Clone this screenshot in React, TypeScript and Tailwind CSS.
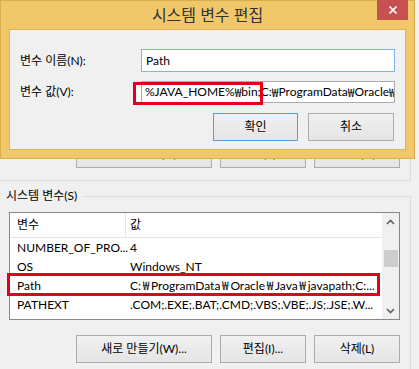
import React from "react";

const btn =
  "h-[28px] border border-[#acacac] bg-[linear-gradient(#f0f0f0,#e5e5e5)] flex items-center justify-center text-[12px] text-black";

const Chevron = ({ down }: { down?: boolean }) => (
  <svg width="9" height="6" viewBox="0 0 9 6" className={down ? "rotate-180" : ""}>
    <path d="M1 5 L4.5 1.5 L8 5" fill="none" stroke="#606060" strokeWidth="1.6" />
  </svg>
);

// backslash shows as a won sign in the Korean UI font
const Won = ({ text }: { text: string }) => (
  <>
    {text.split("₩").map((part, i) => (
      <React.Fragment key={i}>
        {i > 0 && (
          <span className="inline-block w-[10px] text-center font-['Noto_Sans_CJK_KR',sans-serif]">₩</span>
        )}
        {part}
      </React.Fragment>
    ))}
  </>
);

const rows = [
  { name: "NUMBER_OF_PRO...", value: "4" },
  { name: "OS", value: "Windows_NT" },
  { name: "Path", value: "C:₩ProgramData₩Oracle₩Java₩javapath;C:..." },
  { name: "PATHEXT", value: ".COM;.EXE;.BAT;.CMD;.VBS;.VBE;.JS;.JSE;.W..." },
];

export default function App() {
  return (
    <div className="relative w-[419px] h-[369px] overflow-hidden bg-[#f0f0f0] font-['Lato','Noto_Sans_CJK_KR',sans-serif] text-[12px] text-black">
      {/* 사용자 변수 group (mostly hidden behind the dialog) */}
      <div className="flex h-[181px] w-[411px] items-end justify-end gap-[8px] border-r border-b border-[#dcdcdc] pr-[10px] pb-[12px]">
        <div className={`${btn} w-[136px]`}>새로 만들기(N)...</div>
        <div className={`${btn} w-[86px]`}>편집(E)...</div>
        <div className={`${btn} w-[86px]`}>삭제(D)</div>
      </div>

      {/* 시스템 변수 group */}
      <fieldset className="mt-[7px] w-[411px] border-t border-r border-[#dcdcdc] pb-[10px]">
        <legend className="px-[6px] leading-[16px]">시스템 변수(S)</legend>
        <div className="relative ml-[9px] mt-[8px] flex h-[108px] w-[391px] border border-[#828790] bg-white">
          <div className="flex flex-1 flex-col">
            <div className="flex h-[25px] border-b border-[#e5e5e5]">
              <div className="flex w-[116px] items-center border-r border-[#e5e5e5] pl-[7px]">변수</div>
              <div className="flex items-center pl-[4px]">값</div>
            </div>
            {rows.map((r) => (
              <div key={r.name} className="flex h-[19px] items-center whitespace-nowrap">
                <div className="w-[116px] pl-[7px]">{r.name}</div>
                <div className="pl-[4px]">
                  <Won text={r.value} />
                </div>
              </div>
            ))}
          </div>
          <div className="flex w-[17px] flex-col bg-[#f0f0f0]">
            <div className="flex h-[17px] items-center justify-center">
              <Chevron />
            </div>
            <div className="ml-[2px] mt-[20px] h-[17px] w-[14px] bg-[#cdcdcd]" />
            <div className="mt-auto flex h-[17px] items-center justify-center">
              <Chevron down />
            </div>
          </div>
          <div className="pointer-events-none absolute left-[-3px] top-[60px] h-[23px] w-[373px] border-[3px] border-[#e2001a]" />
        </div>
        <div className="mt-[15px] flex justify-end gap-[8px] pr-[10px]">
          <div className={`${btn} w-[136px]`}>새로 만들기(W)...</div>
          <div className={`${btn} w-[86px]`}>편집(I)...</div>
          <div className={`${btn} w-[86px]`}>삭제(L)</div>
        </div>
      </fieldset>

      {/* 시스템 변수 편집 dialog */}
      <div className="absolute left-0 top-0 flex h-[159px] w-[415px] flex-col border border-[#d9ae4c] bg-[#f0c869]">
        <div className="grid h-[28px] grid-cols-[1fr_auto_1fr]">
          <div />
          <div className="self-center text-[16px] leading-none text-[#333]">시스템 변수 편집</div>
          <div className="flex items-start justify-end">
            <div className="-mt-[1px] mr-[6px] flex h-[20px] w-[31px] items-center justify-center bg-[#c75050]">
              <svg width="10" height="10" viewBox="0 0 10 10">
                <path d="M1.5 1.5 L8.5 8.5 M8.5 1.5 L1.5 8.5" stroke="#fff" strokeWidth="1.7" />
              </svg>
            </div>
          </div>
        </div>
        <div className="mx-[8px] mb-[8px] flex-1 border border-[#dcb357] bg-[#f0f0f0] pl-[10px] pr-[11px] pt-[19px]">
          <div className="grid grid-cols-[121px_254px] items-center gap-y-[9px]">
            <span>변수 이름(N):</span>
            <div className="flex h-[23px] items-center border border-[#7eb4ea] bg-white pl-[4px]">Path</div>
            <span>변수 값(V):</span>
            <div className="relative h-[22px] border border-[#abadb3] bg-white">
              <div className="flex h-full items-center overflow-hidden whitespace-nowrap pl-[3px]">
                <Won text="%JAVA_HOME%₩bin;C:₩ProgramData₩Oracle₩Java₩javapath" />
              </div>
              <div className="pointer-events-none absolute left-[-9px] top-0 h-[23px] w-[130px] border-[3px] border-[#e2001a] bg-[linear-gradient(to_right,#fff_5px,transparent_5px)]" />
            </div>
          </div>
          <div className="mt-[10px] flex justify-end gap-[10px]">
            <div className={`${btn} w-[85px] !border-[#569de5]`}>확인</div>
            <div className={`${btn} w-[86px]`}>취소</div>
          </div>
        </div>
      </div>
    </div>
  );
}
